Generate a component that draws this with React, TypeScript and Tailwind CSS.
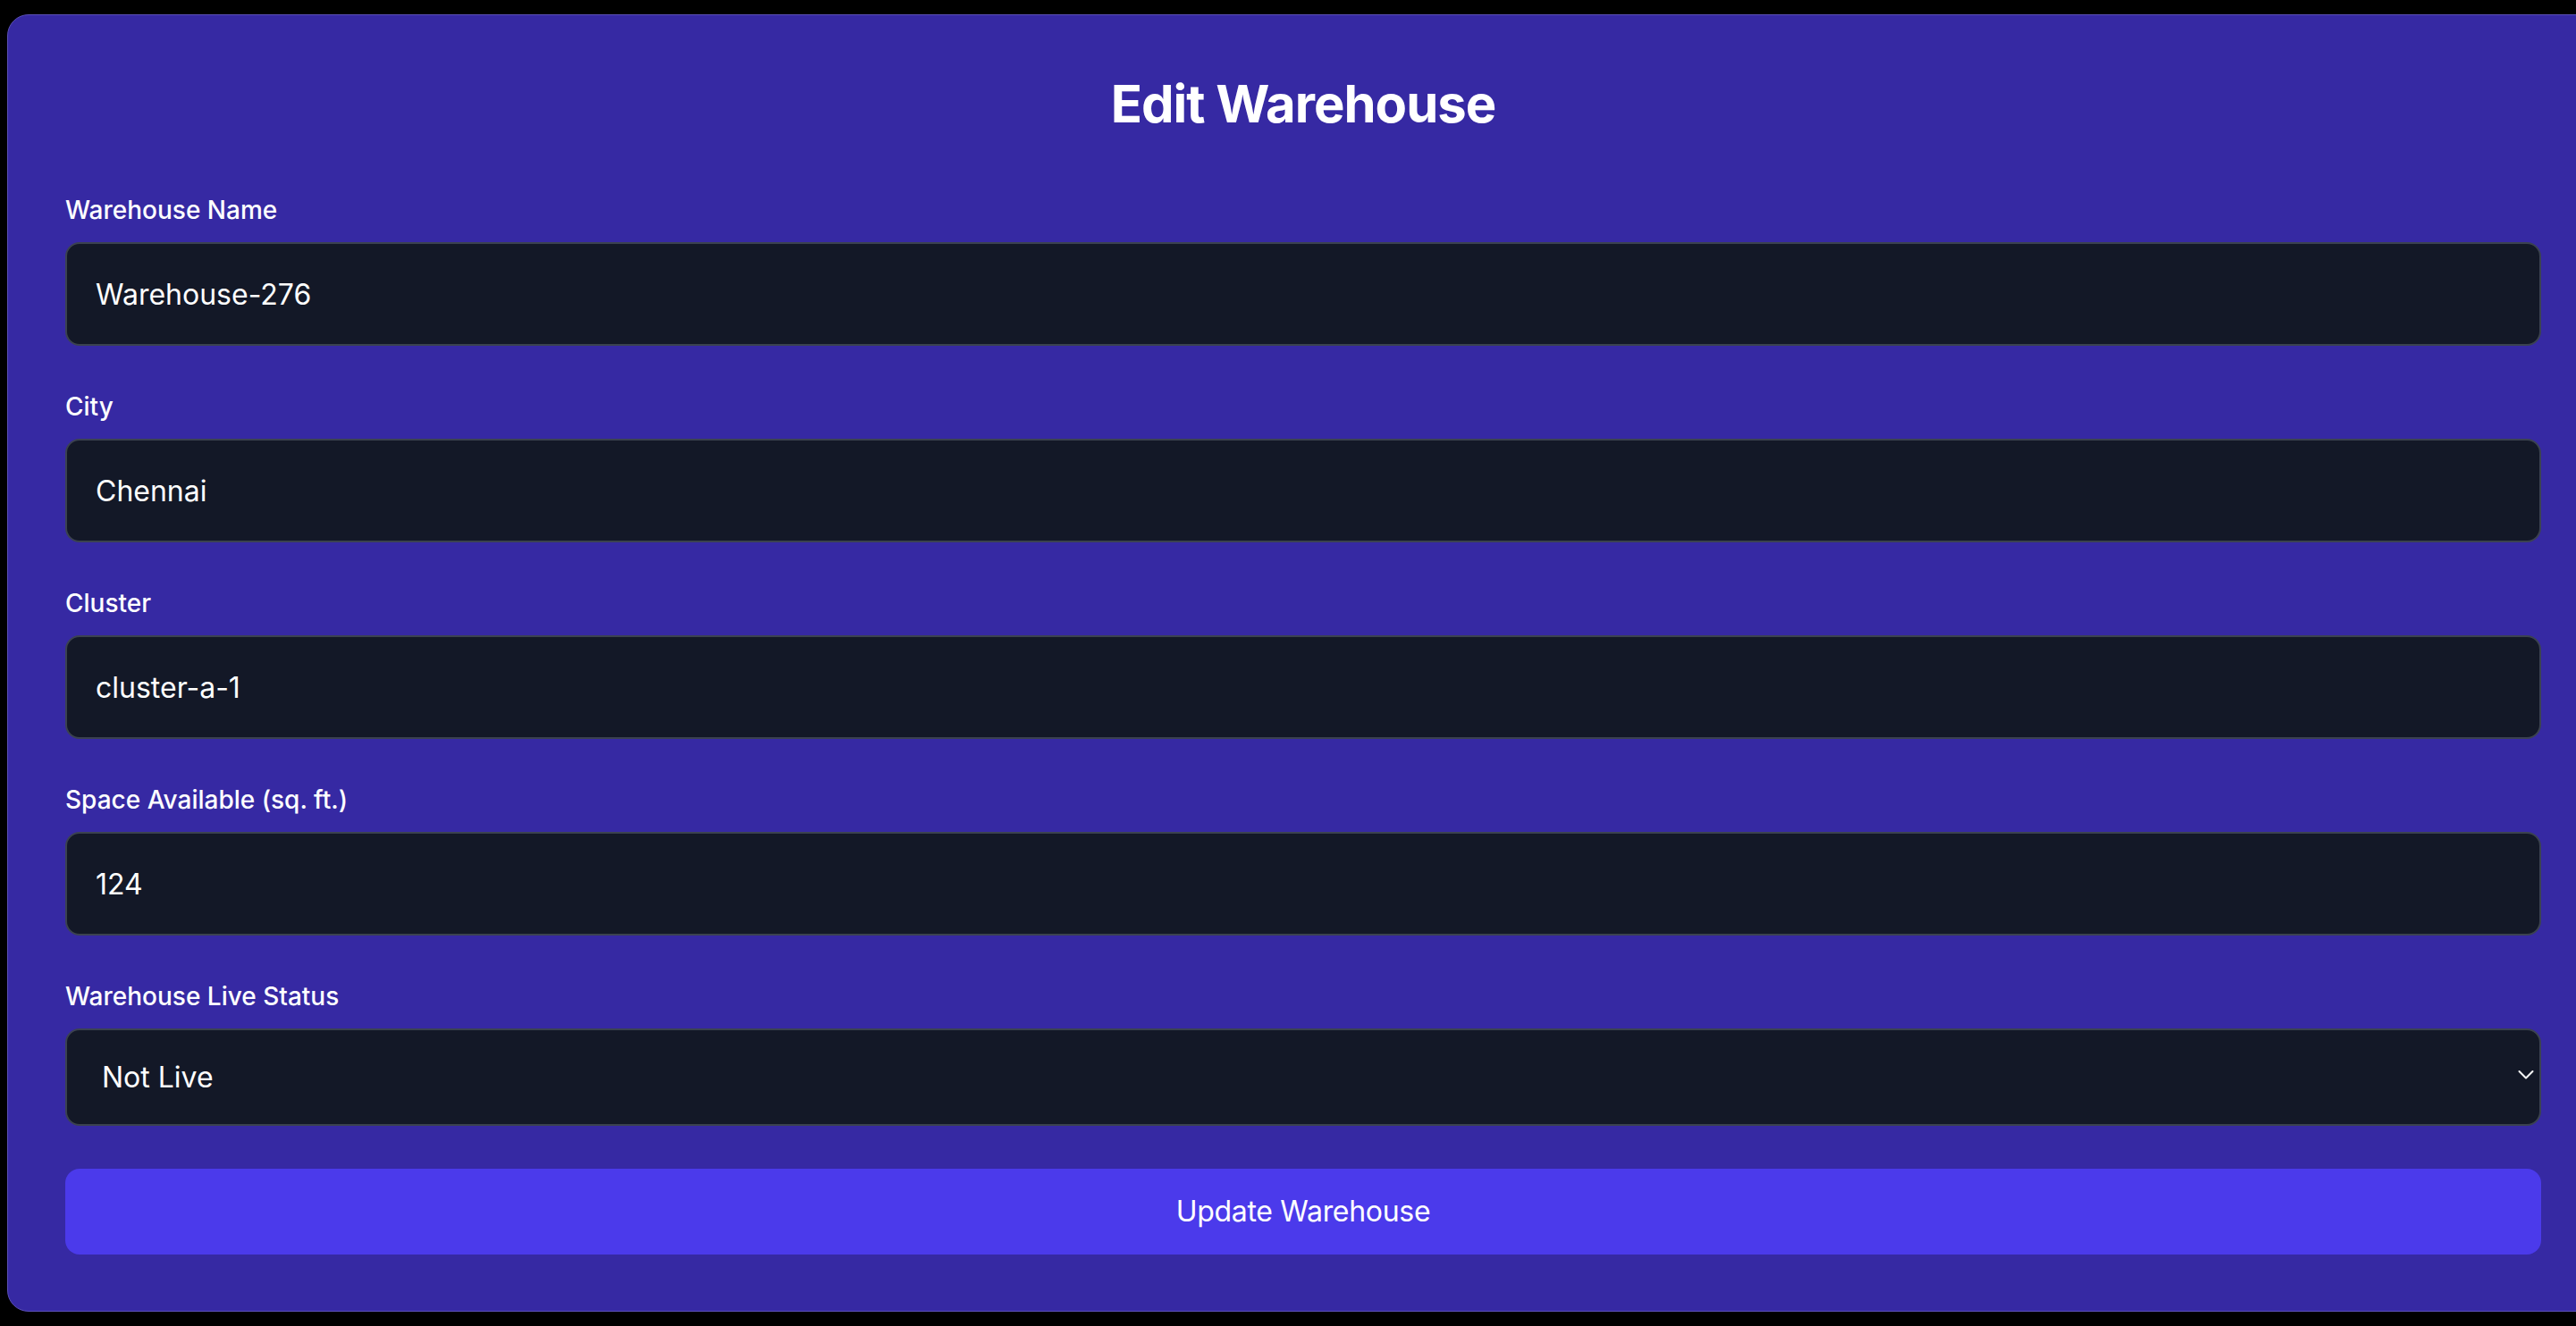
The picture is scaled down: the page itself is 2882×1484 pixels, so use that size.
import React from "react";

const fields = [
  { label: "Warehouse Name", value: "Warehouse-276" },
  { label: "City", value: "Chennai" },
  { label: "Cluster", value: "cluster-a-1" },
  { label: "Space Available (sq. ft.)", value: "124" },
];

export default function App() {
  return (
    <div
      className="w-screen h-screen bg-black overflow-hidden flex pt-[16px] pl-[8px]"
      style={{ fontFamily: "Inter, 'Noto Sans', sans-serif" }}
    >
      <div className="w-[2900px] shrink-0 h-[1452px] bg-[#3629a3] border border-[#5a4fb6] rounded-[24px] pt-[63px] px-[64px] pb-[64px] flex flex-col">
        <h1 className="text-[58px] leading-[72px] font-bold text-white text-center mb-[63px] tracking-[-1px]">
          Edit Warehouse
        </h1>
        <div className="flex flex-col gap-[48px]">
          {fields.map((f) => (
            <div key={f.label} className="flex flex-col">
              <label className="text-[28px] leading-[40px] font-medium text-white mb-[16px]">
                {f.label}
              </label>
              <input
                readOnly
                value={f.value}
                className="h-[116px] w-full bg-[#131827] border-2 border-[#3b4250] rounded-[16px] px-[32px] text-[32px] leading-[48px] text-white outline-none"
              />
            </div>
          ))}
          <div className="flex flex-col">
            <label className="text-[28px] leading-[40px] font-medium text-white mb-[16px]">
              Warehouse Live Status
            </label>
            <div className="relative">
              <select
                defaultValue="notlive"
                className="appearance-none h-[109px] w-full bg-[#131827] border-2 border-[#3b4250] rounded-[16px] pl-[39px] pr-[60px] text-[32px] leading-[48px] text-white outline-none"
              >
                <option value="notlive">Not Live</option>
                <option value="live">Live</option>
              </select>
              <svg
                className="absolute right-[8px] top-[46px] pointer-events-none"
                width="18"
                height="12"
                viewBox="0 0 18 12"
                fill="none"
              >
                <path d="M1.5 2 L9 9.5 L16.5 2" stroke="white" strokeWidth="2" strokeLinecap="round" strokeLinejoin="round" />
              </svg>
            </div>
          </div>
          <button className="h-[96px] w-full bg-[#4b3aeb] rounded-[16px] text-[32px] leading-[48px] text-white tracking-[-0.3px]">
            Update Warehouse
          </button>
        </div>
      </div>
    </div>
  );
}
